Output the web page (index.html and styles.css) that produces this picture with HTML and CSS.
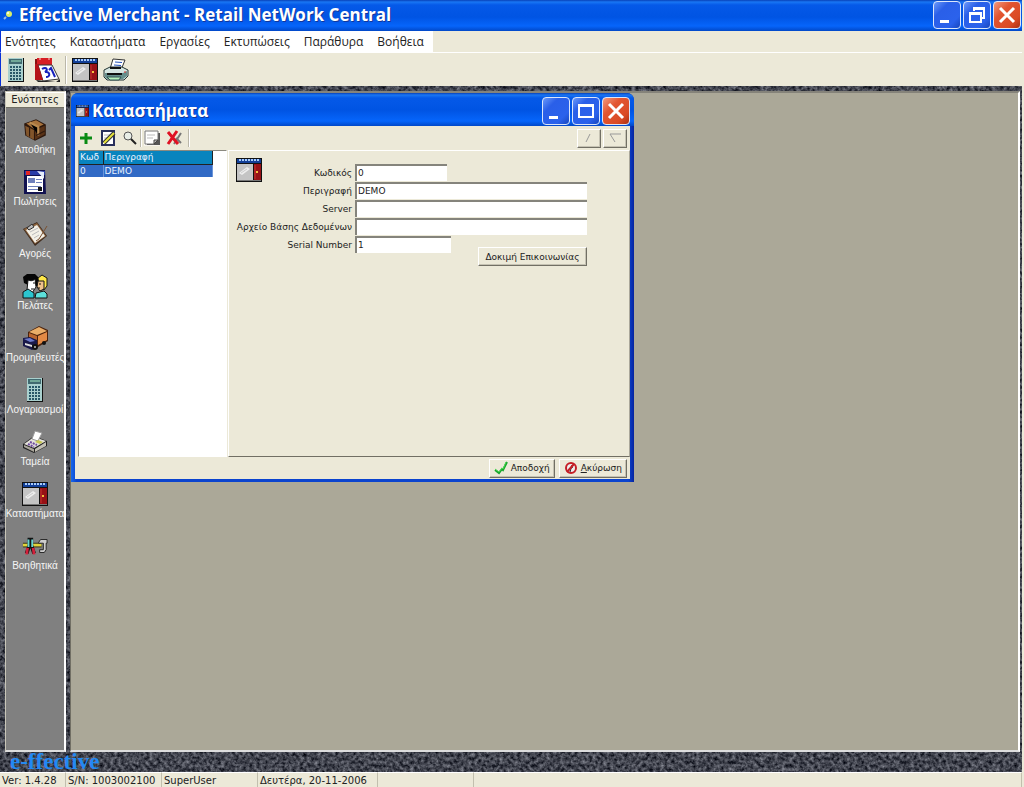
FILE: index.html
```html
<!DOCTYPE html>
<html lang="el">
<head>
<meta charset="utf-8">
<title>Effective Merchant - Retail NetWork Central</title>
<link rel="stylesheet" href="styles.css">
</head>
<body>
<svg class="defs" aria-hidden="true">
  <symbol id="calculator" viewBox="0 0 18 26">
    <path fill="#111" d="M1 1h16v24H1z"/><path fill="#a9d0ce" d="M1 1h15v23H1z"/><path fill="#406a70" d="M2 2h13v5H2z"/><path fill="#70a898" d="M4 3h10v2H4z"/>
    <path stroke="#285868" stroke-width="2" stroke-dasharray="2 1" d="M3 10h12M3 13h12M3 16h12M3 19h12M3 22h12"/>
  </symbol>
  <symbol id="store" viewBox="0 0 26 24">
    <path fill="#111" d="M0 0h26v24H0z"/><path fill="#123f98" d="M1 1h24v4H1z"/><path stroke="#a8cbf8" stroke-width="2" stroke-dasharray="2 1" d="M3 2h21"/>
    <path fill="#c4c4c4" d="M1 6h16v16H1z"/><path fill="#eee" d="M3 15l8-6 3 2-8 6z"/><path stroke="#ccc" d="M5 15l6-4"/><path fill="#971116" d="M18 6h7v16h-7z"/><path stroke="#c53430" d="M19 7v14"/><path fill="#f5c13c" d="M20 13h2v2h-2z"/><path fill="#777" d="M1 22h24v1H1z"/>
  </symbol>
  <symbol id="calendar" viewBox="0 0 26 26">
    <path fill="#222" d="M2 23l20 2 4-3v3H4z"/><path fill="#811" d="M1 2h3l-1 18H1z"/><path fill="#d71e25" d="M3 1h15v8H3z"/><path fill="#fff" stroke="#333" d="M4 8h14l7 14-16 2z"/><path fill="#b41218" d="M1 7h3l5 16H1z"/><path fill="none" stroke="#1621bd" stroke-width="2" d="M8 12c5-3 6 1 3 3 5-1 6 5 1 5M15 13l2-2 4 9"/>
    <path stroke="#fcc" d="M6 1v2m9-2v2"/>
  </symbol>
  <symbol id="printer" viewBox="0 0 26 24">
    <path fill="#fff" stroke="#333" d="M7 11l3-10 12 1-4 10z"/><path stroke="#2450b8" d="M12 4l7 .5M11 7l7 .5"/><path fill="#d5e5e1" stroke="#233" d="M1 12l6-3h12l6 3v6l-4 4H4l-3-3z"/><path fill="#668e8c" d="M2 15h18l4-2v5l-4 3H4l-2-2z"/><path stroke="#111" stroke-width="2" d="M4 16h15M7 10h11"/><path fill="#b6f3bd" stroke="#355" d="M4 19h14l-2 3H7z"/><path stroke="#d33" d="M21 14h2"/>
  </symbol>
  <symbol id="box" viewBox="0 0 24 24">
    <path fill="#2d180d" d="M2 6l11-4 9 5v10l-10 5L3 17z"/><path fill="#a8733c" d="M4 6l9-3 7 4-9 4z"/><path fill="#82552b" d="M3 8l8 4v9l-7-4z"/><path fill="#593216" d="M12 12l9-4v8l-9 5z"/><path stroke="#b98a50" stroke-width="2" d="M7 5l8 4v8"/><path stroke="#2d180d" d="M7 10v8M13 17l8-4"/>
  </symbol>
  <symbol id="invoice" viewBox="0 0 24 26">
    <path fill="#111150" d="M1 1h21l1 24H1z"/><path fill="#2a3ca8" d="M2 2h20v4H2z"/><path fill="#e32626" d="M3 2h4v4H3z"/><path fill="#fff" d="M4 7h16v16H4z"/><path fill="#e6eefb" d="M14 2l7 1v7z"/><path fill="#6e80bc" d="M5 9h7v5H5zM13 10h6v1h-6zM13 13h6v1h-6zM5 17h13v1H5zM5 20h13v1H5z"/><path fill="#111" d="M15 18h4v4h-4z"/>
  </symbol>
  <symbol id="clipboard" viewBox="0 0 26 26">
    <path fill="#3e2b1f" d="M1 8L15 1l10 14-12 10z"/><path fill="#8b633d" d="M2 8l13-6 9 13-11 8z"/><path fill="#f3f0e7" d="M4 9l11-5 8 11-10 7z"/><path stroke="#bbb" d="M8 11l8-4M10 14l7-4M12 17l5-3"/><path fill="#bbb" stroke="#333" d="M5 7l5-4 2 3-5 3z"/><path fill="none" stroke="#7a5233" stroke-width="1" d="M25 5l-8 13-3 2"/>
  </symbol>
  <symbol id="people" viewBox="0 0 26 26">
    <path fill="#050505" d="M1 4l4-3h8l3 3v9H8l-6-3z"/><path fill="#fff" stroke="#111" d="M6 7c5 2 7-1 7-1l1 8-4 6-5-3z"/><path fill="#2bc5d0" stroke="#111" d="M1 25v-6l5-3 6 4v5z"/><path fill="#ffe849" stroke="#151515" d="M16 5l4-3 5 3v8l-3 4-5-5z"/><path fill="#efc18c" stroke="#111" d="M16 8h6v8l-4 2-3-4z"/><path fill="#5de0db" stroke="#111" d="M13 25l1-5 8-2 3 3v4z"/><path stroke="#111" d="M11 10h2M17 11h2M16 15h2M9 16h3"/>
  </symbol>
  <symbol id="truck" viewBox="0 0 26 26">
    <path fill="#4b220c" d="M6 7l11-6 9 4v11l-10 6-10-4z"/><path fill="#eaae68" d="M7 7l10-5 8 4-10 4z"/><path fill="#b9652e" d="M7 8l8 3v8l-8-3z"/><path fill="#e38a45" d="M16 11l9-4v8l-9 5z"/><path fill="#191949" d="M1 13l7-1 7 3v8l-5 2-9-4z"/><path fill="#6b79c8" d="M2 14l6-1 5 3-5 1z"/><path fill="#ddd" d="M3 18l7 2v2l-7-2z"/><circle cx="13" cy="22" r="3" fill="#111"/><circle cx="13" cy="22" r="1" fill="#bbb"/><circle cx="22" cy="18" r="2" fill="#111"/>
  </symbol>
  <symbol id="till" viewBox="0 0 26 24">
    <path fill="#222" d="M1 14l11-8 13 5v5l-13 7L1 18z"/><path fill="#e4e2db" d="M2 14L12 7l12 4-12 7z"/><path fill="#aaa69b" d="M2 15l10 4v3L2 17z"/><path fill="#c3bfb4" d="M13 19l11-7v4l-11 6z"/><path fill="#fff" stroke="#999" d="M10 9l3-8 7 2-4 8z"/><path fill="#c6c550" d="M16 10l5 2-3 2-5-2z"/><path stroke="#6e4a9d" stroke-width="2" stroke-dasharray="2 1" d="M8 12l7 3M6 14l6 3"/>
  </symbol>
  <symbol id="tools" viewBox="0 0 28 20">
    <path stroke="#272817" stroke-width="5" d="M1 9h20"/><path stroke="#e0d33a" stroke-width="3" d="M1 9h20"/><path fill="none" stroke="#111" stroke-width="4" d="M8 1v8l-3 9M10 1v8l3 9"/><path fill="none" stroke="#66d5d1" stroke-width="2" d="M7 3v8M11 3v8"/><path stroke="#d2203b" stroke-width="3" d="M6 12l-1 7m7-7l1 7"/><path fill="#ccc" stroke="#222" d="M18 6l2-3h7v4h-1v7l-2 3h-5v-3h4V7h-5z"/>
  </symbol>
  <symbol id="minimise" viewBox="0 0 26 26"><path fill="#fff" d="M6 18h9v3H6z"/></symbol>
  <symbol id="restore" viewBox="0 0 26 26"><path fill="none" stroke="#fff" stroke-width="2" d="M10 9V6h10v10h-3M6 11h11v9H6z"/><path fill="#fff" d="M9 5h12v3H9zM5 10h13v3H5z"/></symbol>
  <symbol id="maximise" viewBox="0 0 26 26"><path fill="none" stroke="#fff" stroke-width="2" d="M6 7h14v12H6z"/><path fill="#fff" d="M5 6h16v3H5z"/></symbol>
  <symbol id="close" viewBox="0 0 26 26"><path stroke="#fff" stroke-width="3" d="M6 6l14 14M20 6L6 20"/></symbol>
</svg>

<header class="titlebar">
  <svg class="app-icon" viewBox="0 0 10 10"><circle cx="6" cy="4" r="3" fill="#d9ed68"/><circle cx="5" cy="3" r="1" fill="#fff"/><path stroke="#9ab8e9" stroke-width="2" d="M1 9l2-2"/></svg>
  <h1 class="title">Effective Merchant - Retail NetWork Central</h1>
  <div class="window-buttons">
    <button class="winbtn" aria-label="Minimise"><svg><use href="#minimise"/></svg></button>
    <button class="winbtn" aria-label="Restore"><svg><use href="#restore"/></svg></button>
    <button class="winbtn winbtn-close" aria-label="Close"><svg><use href="#close"/></svg></button>
  </div>
</header>
<nav class="menubar">
  <div class="menus">
    <button>Ενότητες</button><button>Καταστήματα</button><button>Εργασίες</button><button>Εκτυπώσεις</button><button>Παράθυρα</button><button>Βοήθεια</button>
  </div>
</nav>
<div class="toolbar">
  <button aria-label="Αριθμομηχανή"><svg class="i-calc"><use href="#calculator"/></svg></button>
  <button aria-label="Ημερολόγιο"><svg class="i-large"><use href="#calendar"/></svg></button>
  <span class="divider"></span>
  <button aria-label="Καταστήματα"><svg class="i-large"><use href="#store"/></svg></button>
  <button aria-label="Εκτύπωση"><svg class="i-large"><use href="#printer"/></svg></button>
</div>

<main class="workspace">
  <svg class="granite" aria-hidden="true"><filter id="stone" x="0" y="0" width="100%" height="100%" color-interpolation-filters="sRGB"><feTurbulence type="fractalNoise" baseFrequency="0.28" numOctaves="3" seed="7"/><feColorMatrix values="0.7 0 0 0 -0.09  0.7 0 0 0 -0.08  0.7 0 0 0 -0.04  0 0 0 0 1"/></filter><rect width="100%" height="100%" filter="url(#stone)"/></svg>
  <div class="columns">
    <aside class="sidebar">
      <button class="side-head">Ενότητες</button>
      <nav class="modules">
        <button><svg><use href="#box"/></svg><span>Αποθήκη</span></button>
        <button><svg><use href="#invoice"/></svg><span>Πωλήσεις</span></button>
        <button><svg><use href="#clipboard"/></svg><span>Αγορές</span></button>
        <button><svg><use href="#people"/></svg><span>Πελάτες</span></button>
        <button><svg><use href="#truck"/></svg><span>Προμηθευτές</span></button>
        <button><svg><use href="#calculator"/></svg><span>Λογαριασμοί</span></button>
        <button><svg><use href="#till"/></svg><span>Ταμεία</span></button>
        <button><svg><use href="#store"/></svg><span>Καταστήματα</span></button>
        <button><svg><use href="#tools"/></svg><span>Βοηθητικά</span></button>
      </nav>
    </aside>
    <section class="desktop">
      <div class="window">
        <header class="window-title">
          <svg class="window-icon"><use href="#store"/></svg>
          <h2 class="title">Καταστήματα</h2>
          <div class="window-buttons">
            <button class="winbtn" aria-label="Minimise"><svg><use href="#minimise"/></svg></button>
            <button class="winbtn" aria-label="Maximise"><svg><use href="#maximise"/></svg></button>
            <button class="winbtn winbtn-close" aria-label="Close"><svg><use href="#close"/></svg></button>
          </div>
        </header>
        <div class="window-tools">
          <button aria-label="Προσθήκη"><svg viewBox="0 0 16 16"><path stroke="#078b12" stroke-width="3" d="M8 3v11M2 8h12"/></svg></button>
          <button aria-label="Επεξεργασία"><svg viewBox="0 0 16 16"><path fill="#fff" stroke="#28305c" stroke-width="2" d="M2 1h12v14H2z"/><path stroke="#bbb" d="M4 5h6M4 8h4"/><path stroke="#333" stroke-width="4" d="M4 13L14 3"/><path stroke="#e7e43a" stroke-width="2" d="M4 13L14 3"/></svg></button>
          <button aria-label="Αναζήτηση"><svg viewBox="0 0 16 16"><circle cx="6" cy="6" r="4" fill="#e8eee7" stroke="#555"/><path stroke="#222" stroke-width="2" d="M9 9l5 5"/></svg></button>
          <span class="divider"></span>
          <button class="pressed" aria-label="Σελίδα"><svg viewBox="0 0 16 16"><path fill="#555" d="M3 3h13v12H3z"/><path fill="#fff" stroke="#777" d="M1 1h13v9l-4 4H1z"/><path fill="#bbb" stroke="#444" d="M10 10h4l-4 4z"/><path stroke="#bbb" d="M3 5h8M3 8h6"/></svg></button>
          <button aria-label="Διαγραφή"><svg viewBox="0 0 16 16"><path stroke="#777" stroke-width="2" d="M8 14l7-11M10 8l5 5"/><path stroke="#df1223" stroke-width="3" d="M2 2l10 12M11 1L2 14"/></svg></button>
          <span class="divider"></span>
          <div class="sorts">
            <button class="raised" aria-label="Προηγούμενο"><svg viewBox="0 0 16 12"><path stroke="#999" d="M5 10l4-8"/></svg></button>
            <button class="raised" aria-label="Επόμενο"><svg viewBox="0 0 16 12"><path fill="none" stroke="#999" d="M14 2H3l5 8"/></svg></button>
          </div>
        </div>
        <div class="window-body">
          <div class="list">
            <table>
              <thead><tr><th class="code">Κωδ</th><th>Περιγραφή</th></tr></thead>
              <tbody><tr><td>0</td><td>DEMO</td></tr></tbody>
            </table>
          </div>
          <form class="detail" id="store-form">
            <svg class="form-icon"><use href="#store"/></svg>
            <label class="r1" for="code">Κωδικός</label><input id="code" class="short r1" value="0">
            <label class="r2" for="desc">Περιγραφή</label><input id="desc" class="r2" value="DEMO">
            <label class="r3" for="server">Server</label><input id="server" class="r3">
            <label class="r4" for="db">Αρχείο Βάσης Δεδομένων</label><input id="db" class="r4">
            <label class="r5" for="serial">Serial Number</label><input id="serial" class="serial r5" value="1">
            <button type="button" class="raised test">Δοκιμή Επικοινωνίας</button>
          </form>
        </div>
        <footer class="window-actions">
          <button class="raised" form="store-form" type="button"><svg viewBox="0 0 14 14"><path fill="none" stroke="#16a52a" stroke-width="2" d="M1 9l4 3 3-4 1 1 4-8"/><path fill="none" stroke="#49d650" d="M1 8l4 3 3-4 1 1 3-7"/></svg>Αποδοχή</button>
          <button class="raised" type="button"><svg viewBox="0 0 14 14"><circle cx="7" cy="7" r="5" fill="#eee" stroke="#c41e25" stroke-width="2"/><path stroke="#222" stroke-width="1" d="M8 4L6 11M5 8l4-2"/><path stroke="#c41e25" stroke-width="2" d="M10 3l-7 8"/></svg><span><u>Α</u>κύρωση</span></button>
        </footer>
      </div>
    </section>
  </div>
  <div class="brand">e-ffective</div>
</main>
<footer class="statusbar">
  <span class="s-ver">Ver: 1.4.28</span><span class="s-user">S/N: 1003002100</span><span class="s-user">SuperUser</span><span class="s-date">Δευτέρα, 20-11-2006</span><span class="s-user"></span><span class="s-rest"></span>
</footer>
</body>
</html>
```
FILE: styles.css
```css
* { box-sizing: border-box; }
html, body { height: 100%; }
body {
  margin: 0;
  display: flex;
  flex-direction: column;
  overflow: hidden;
  padding-right: 2px;
  background: #ece9d8;
  color: #222;
  font-family: "DejaVu Sans", sans-serif;
  font-size: 9px;
}
button, input { font: inherit; color: inherit; margin: 0; }
button { border: 0; background: none; padding: 0; white-space: nowrap; }
svg { display: block; flex: none; }
.defs { position: absolute; width: 0; height: 0; }

.titlebar {
  flex: none;
  height: 31px;
  display: flex;
  align-items: center;
  gap: 6px;
  padding: 0 1px 1px 3px;
  background: linear-gradient(#0841b8, #1976f4 2px, #0559e8 5px, #0054e3 17px, #0665fb 26px, #0148c8);
}
.app-icon { width: 10px; height: 10px; }
.title {
  margin: 0;
  flex: 1;
  color: #fff;
  font: bold 17px/24px "Open Sans", sans-serif;
  text-shadow: 1px 1px #12369b;
  white-space: nowrap;
}
.window-buttons { display: flex; gap: 2px; }
.winbtn {
  width: 28px;
  height: 28px;
  border: 1px solid #dbe6fb;
  border-radius: 4px;
  background: linear-gradient(135deg, #6c9afa, #2a5fe8 30%, #2b62ec 75%, #1746bd);
}
.winbtn svg { width: 26px; height: 26px; }
.winbtn-close { background: linear-gradient(135deg, #f19a7f, #e25531 35%, #da4a25 75%, #a92f12); }

.menubar { flex: none; height: 22px; border-bottom: 1px solid #fff; border-left: 1px solid #0831d9; }
.menus { display: inline-flex; gap: 14px; height: 21px; padding: 0 9px 0 4px; background: #fff; font: 12px/20px "Open Sans", sans-serif; }

.toolbar { flex: none; height: 33px; display: flex; align-items: center; gap: 5px; padding-left: 6px; border-left: 1px solid #0831d9; }
.toolbar .divider { height: 28px; }
.divider { width: 2px; border-left: 1px solid #bab7a9; border-right: 1px solid #fff; }
.i-calc { width: 22px; height: 26px; padding-right: 4px; }
.i-large { width: 26px; height: 26px; }

.workspace { flex: 1; min-height: 0; position: relative; display: flex; flex-direction: column; background: #3f424a; }
.granite { position: absolute; width: 100%; height: 100%; }
.columns { flex: 1; min-height: 0; position: relative; display: flex; gap: 4px; padding: 5px 2px 0 5px; }
.sidebar { flex: none; width: 61px; display: flex; flex-direction: column; background: #808080; border: 1px solid #c9c6b8; border-right: 2px solid #fff; border-bottom: 2px solid #ddd; }
.side-head { height: 16px; background: #ece9d8; border-top: 1px solid #fff; border-bottom: 1px solid #716f64; font-size: 10px; line-height: 14px; }
.modules { display: flex; flex-direction: column; padding-top: 9px; }
.modules button { height: 52px; display: flex; flex-direction: column; align-items: center; color: #f5f5f5; font: 10px/12px "Liberation Sans", sans-serif; }
.modules svg { width: 26px; height: 26px; margin-bottom: 1px; }
.desktop { flex: 1; position: relative; background: #aba898; border-top: 2px solid #85837a; border-left: 1px solid #716f64; border-right: 2px solid #fff; border-bottom: 2px solid #ddd; }
.brand { flex: none; height: 20px; padding-left: 10px; position: relative; color: #2389f3; font: bold 23px/20px "Liberation Serif", serif; }

.window { position: absolute; top: 0; left: 0; width: 563px; display: flex; flex-direction: column; padding: 0 4px 3px; background: linear-gradient(90deg, #1769ec, #0a43ce 1%, #0a43ce 99%, #0624a0); border-radius: 7px 7px 0 0; }
.window-title { height: 33px; margin: 0 -4px; padding: 3px 4px 1px 5px; display: flex; align-items: center; gap: 3px; border-radius: 7px 7px 0 0; background: linear-gradient(#0841b8, #1976f4 2px, #0559e8 5px, #0054e3 17px, #0665fb 28px, #0148c8); }
.window-icon { width: 13px; height: 12px; }
.window-tools { display: flex; align-items: center; gap: 6px; height: 24px; padding: 1px 3px; background: #ece9d8; }
.window-tools svg { width: 16px; height: 16px; }
.window-tools .divider { height: 18px; margin: 0 -4px; }
.window-tools .divider:nth-of-type(2) { margin: 0; }
.pressed { background: #f7f5ee; }
.sorts { display: flex; gap: 2px; margin-left: auto; }
.sorts .raised { width: 24px; height: 19px; padding: 0 3px; }
.raised { background: #ece9d8; border: 1px solid; border-color: #fff #716f64 #716f64 #fff; box-shadow: inset -1px -1px #c5c2b3; }
.window-body { display: flex; gap: 1px; height: 307px; padding-left: 3px; background: #ece9d8; }
.list { width: 149px; background: #fff; border: 1px solid #8b8a80; border-color: #8b8a80 #fff #fff #8b8a80; }
.list table { width: 134px; border-collapse: collapse; table-layout: fixed; color: #e8f2ff; line-height: 12px; }
.list th, .list td { height: 13px; padding: 0 1px; text-align: left; font-weight: normal; overflow: hidden; white-space: nowrap; }
.list th { background: #0884be; border-right: 1px solid #222; border-bottom: 1px solid #222; }
.list td { background: #316ac5; border-right: 1px solid #6c95d8; }
.list .code { width: 24px; }
.detail {
  flex: 1;
  display: grid;
  grid-template-columns: 116px 232px;
  grid-template-rows: repeat(5, 18px) 12px;
  align-content: start;
  column-gap: 3px;
  padding: 13px 0 0 7px;
  border: 1px solid #fff;
  border-bottom-color: #716f64;
  border-right-color: #aaa79a;
}
.detail label { grid-column: 1; text-align: right; white-space: nowrap; line-height: 18px; }
.detail input { grid-column: 2; width: 100%; height: 17px; padding: 0 1px 1px; border: 0; border-top: 2px solid #85847c; border-left: 2px solid #85847c; background: #fff; outline: 0; border-radius: 0; }
.detail .short { width: 92px; }
.detail .serial { width: 96px; }
.detail .r1 { grid-row: 1; }
.detail .r2 { grid-row: 2; }
.detail .r3 { grid-row: 3; }
.detail .r4 { grid-row: 4; }
.detail .r5 { grid-row: 5; }
.form-icon { grid-area: 1 / 1 / 3 / 2; width: 26px; height: 24px; margin-top: -6px; }
.test { grid-area: 5 / 2 / 7 / 3; justify-self: end; align-self: end; width: 109px; height: 19px; }
.window-actions { display: flex; justify-content: flex-end; align-items: center; gap: 4px; height: 22px; padding: 0 3px; background: #ece9d8; }
.window-actions .raised { height: 19px; display: flex; align-items: center; gap: 3px; padding: 0 4px; }
.window-actions svg { width: 14px; height: 14px; }

.statusbar { flex: none; height: 15px; display: flex; font-size: 10px; line-height: 15px; }
.statusbar span { padding-left: 2px; white-space: nowrap; border-top: 1px solid #fff; border-right: 1px solid #c2bfae; }
.s-ver { width: 66px; }
.s-user { width: 96px; }
.s-date { width: 120px; }
.s-rest { flex: 1; }
```
